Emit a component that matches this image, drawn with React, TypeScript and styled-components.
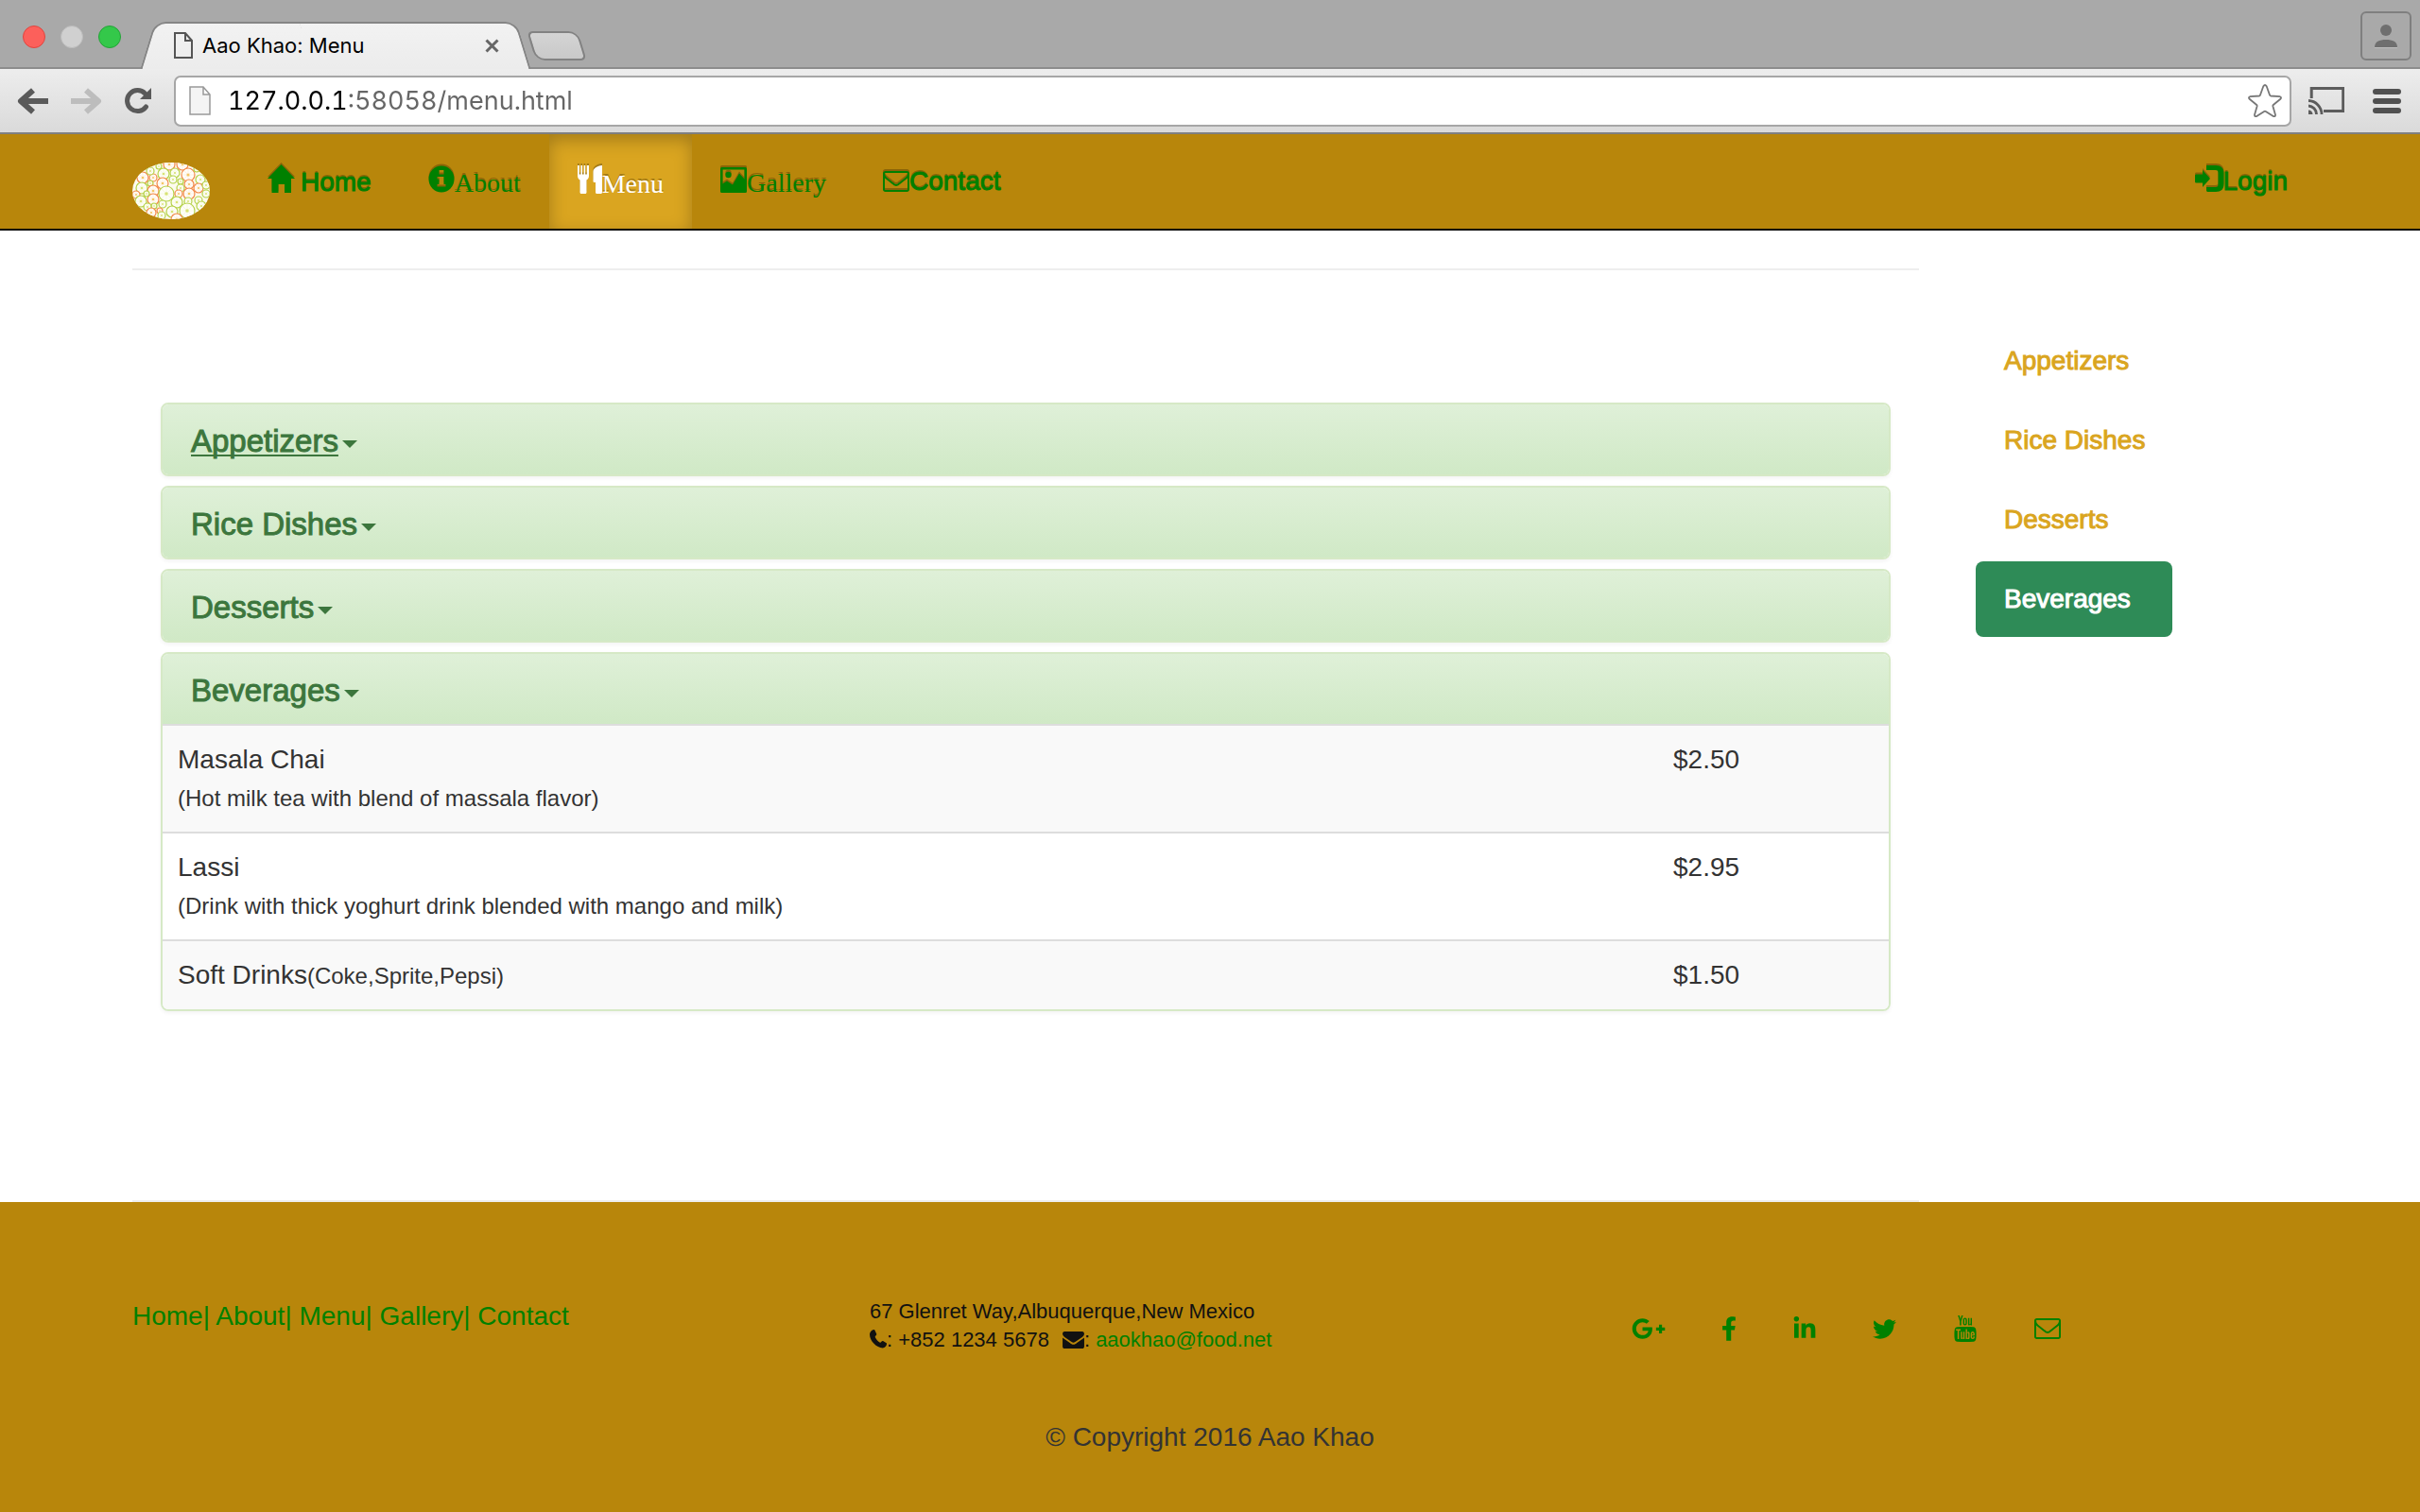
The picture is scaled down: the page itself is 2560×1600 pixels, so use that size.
import React from 'react';
import { FaFacebookF, FaGooglePlusG, FaLinkedinIn, FaTwitter } from 'react-icons/fa';
import { TfiYoutube } from 'react-icons/tfi';
import styled, { createGlobalStyle, css } from 'styled-components';

const SANS = '"Liberation Sans", Arial, sans-serif';
const SERIF = '"Liberation Serif", "Times New Roman", serif';
const CHROME = 'Inter, "Open Sans", sans-serif';

const GlobalStyle = createGlobalStyle`
  *, *::before, *::after { box-sizing: border-box; }
  body { margin: 0; background: #fff; color: #333; font: 28px/40px ${SANS}; }
  a { text-decoration: none; color: inherit; }
  ul { list-style: none; margin: 0; padding: 0; }
  svg { display: block; flex: none; }
  button { font: inherit; color: inherit; background: none; border: 0; padding: 0; }
`;

const Page = styled.div`
  min-height: 100vh;
  display: flex;
  flex-direction: column;
`;

/* ---------- browser window ---------- */

const TabStrip = styled.div`
  display: flex;
  align-items: flex-end;
  height: 73px;
  padding: 0 9px 0 24px;
  background: #a9a9a9;
  box-shadow: inset 0 -2px 0 #8c8c8c;
`;

const Lights = styled.div`
  display: flex;
  align-self: center;
  gap: 16px;
  padding-top: 4px;
`;

const Light = styled.button<{ $fill: string; $edge: string }>`
  width: 24px;
  height: 24px;
  border-radius: 50%;
  background: ${p => p.$fill};
  border: 1px solid ${p => p.$edge};
`;

const Tab = styled.div`
  position: relative;
  z-index: 1;
  display: flex;
  align-items: center;
  width: 384px;
  height: 50px;
  margin-left: 32px;
  padding: 0 12px 0 24px;
  color: #000;
  font: 22px/28px ${CHROME};
  &::before, &::after {
    content: '';
    position: absolute;
    z-index: -1;
    top: 0;
    bottom: 0;
    width: 60%;
    background: linear-gradient(#f2f2f2, #ececec);
    border-top: 2px solid #858585;
  }
  &::before {
    left: -4px;
    border-left: 2px solid #858585;
    border-top-left-radius: 12px;
    transform: skewX(-17deg);
  }
  &::after {
    right: -10px;
    border-right: 2px solid #858585;
    border-top-right-radius: 12px;
    transform: skewX(17deg);
  }
`;

const TabTitle = styled.span`
  flex: 1;
  padding-left: 10px;
`;

const CloseTab = styled.button`
  padding: 4px;
`;

const NewTab = styled.button`
  align-self: center;
  width: 54px;
  height: 31px;
  margin: 24px 0 0 18px;
  border: 2px solid #828282;
  border-radius: 6px 10px 6px 10px;
  background: linear-gradient(#d4d4d4, #c9c9c9);
  transform: skewX(17deg);
`;

const Profile = styled.button`
  display: grid;
  place-items: center;
  width: 54px;
  height: 52px;
  margin: 0 0 9px auto;
  border: 2px solid #7f7f7f;
  border-radius: 6px;
`;

const Toolbar = styled.div`
  display: flex;
  align-items: center;
  height: 69px;
  padding: 0 18px;
  background: linear-gradient(#ededed, #dadada);
  border-bottom: 2px solid #7f7f7f;
`;

const ToolButtons = styled.div`
  display: flex;
  gap: 24px;
  padding-right: 24px;
`;

const UrlBox = styled.label`
  flex: 1;
  display: flex;
  align-items: center;
  height: 54px;
  padding: 0 8px 0 14px;
  background: #fff;
  border: 2px solid #a6a6a6;
  border-radius: 7px;
`;

const UrlInput = styled.input`
  flex: 1;
  min-width: 0;
  height: 40px;
  margin-left: 18px;
  padding: 0;
  border: 0;
  outline: 0;
  font: 27px/40px ${CHROME};
  font-variant-numeric: tabular-nums;
  font-kerning: none;
  color: #666;
  background: linear-gradient(to right, #000 124px, #666 124px);
  background-clip: text;
  -webkit-text-fill-color: transparent;
`;

const ToolEnd = styled.div`
  display: flex;
  align-items: center;
  gap: 30px;
  padding: 0 2px 0 18px;
`;

/* ---------- site header ---------- */

const NavBar = styled.nav`
  display: flex;
  height: 102px;
  padding: 0 140px;
  background: #b8860b;
  border-bottom: 2px solid #080808;
`;

const Brand = styled.a`
  padding: 30px 31px 0 0;
`;

const NavList = styled.ul`
  display: flex;
  flex: 1;
  > li:last-child { margin-left: auto; }
  > li:last-child a { padding-right: 0; }
`;

const NavLink = styled.a<{ $serif?: boolean; $active?: boolean; $gap?: boolean }>`
  display: flex;
  align-items: baseline;
  height: 100px;
  padding: ${p => (p.$serif ? 32 : 30)}px 30px 0;
  color: green;
  font-family: ${p => (p.$serif ? SERIF : SANS)};
  text-shadow: 0 -2px 0 rgba(0, 0, 0, 0.25);
  svg {
    margin-right: ${p => (p.$gap ? 6 : 0)}px;
    transform: translateY(${p => (p.$serif ? 1 : 2)}px);
    filter: drop-shadow(0 -2px 0 rgba(0, 0, 0, 0.25));
  }
  ${p => !p.$serif && css`-webkit-text-stroke: 1px;`}
  ${p => p.$active && css`
    color: #fff;
    background: #daa520;
    box-shadow: inset 0 6px 18px rgba(0, 0, 0, 0.25);
  `}
`;

/* ---------- page body ---------- */

const Main = styled.main`
  flex: 1;
  display: flex;
  gap: 60px;
  padding: 0 140px;
`;

const Content = styled.section`
  flex: 1;
  display: flex;
  flex-direction: column;
  padding-top: 40px;
`;

const Rule = styled.hr`
  width: 100%;
  margin: 0;
  border: 0;
  border-top: 2px solid #eee;
`;

const Accordion = styled.div`
  flex: 1;
  display: flex;
  flex-direction: column;
  gap: 10px;
  padding: 140px 30px 200px;
`;

const Panel = styled.section`
  border: 2px solid #d6e9c6;
  border-radius: 8px;
  box-shadow: 0 2px 4px rgba(0, 0, 0, 0.05);
  overflow: hidden;
`;

const PanelTitle = styled.h4`
  margin: 0;
  padding: 20px 30px 16px;
  background: linear-gradient(#dff0d8, #d0e9c6);
  color: #3c763d;
  font-size: 33px;
  font-weight: 400;
  line-height: 38px;
  -webkit-text-stroke: 1px;
`;

const PanelToggle = styled.button<{ $underlined?: boolean }>`
  display: flex;
  align-items: center;
  gap: 4px;
  span {
    text-decoration: ${p => (p.$underlined ? 'underline' : 'none')};
    text-decoration-thickness: 2px;
    text-decoration-skip-ink: none;
    text-underline-offset: 3px;
  }
  &::after {
    content: '';
    margin-top: 6px;
    border: 8px solid transparent;
    border-top-color: currentColor;
    border-bottom: 0;
  }
`;

const MenuTable = styled.table`
  width: 100%;
  border-collapse: collapse;
  td {
    padding: 16px;
    border-top: 2px solid #ddd;
    vertical-align: top;
  }
  td:last-child { width: 244px; }
  tr:nth-child(odd) { background: #f9f9f9; }
  small { font-size: 24px; line-height: 1; }
`;

const SideNav = styled.nav`
  flex: 0 0 330px;
  padding-top: 98px;
  ul { display: grid; gap: 4px; width: 208px; }
`;

const SideLink = styled.a<{ $active?: boolean }>`
  display: block;
  padding: 20px 0 20px 30px;
  border-radius: 8px;
  color: ${p => (p.$active ? '#fff' : '#daa520')};
  background: ${p => (p.$active ? '#2e8b57' : 'transparent')};
  -webkit-text-stroke: 1px;
`;

/* ---------- footer ---------- */

const Footer = styled.footer`
  padding: 101px 140px 59px;
  background: #b8860b;
`;

const FooterColumns = styled.div`
  display: grid;
  grid-template-columns: 780fr 806fr 694fr;
  min-height: 66px;
  color: green;
`;

const Address = styled.address`
  color: #111;
  font: 22px/30px ${SANS};
  svg { display: inline-block; vertical-align: -2px; }
  a { color: green; }
`;

const Contact = styled.span`
  margin-right: 14px;
`;

const Social = styled.ul`
  display: flex;
  align-items: center;
  gap: 59px;
  a { display: block; }
`;

const FacebookIcon = styled(FaFacebookF)`
  width: 16px;
  height: 26px;
`;

const Copyright = styled.p`
  margin: 62px 0 0;
  text-align: center;
`;

/* ---------- drawings ---------- */

const ORANGE = '#f28a4b';
const LIME = '#b5d24a';
const slices: [number, number, number, string][] = [
  [39, 2, 6, ORANGE], [53, 2, 6, ORANGE], [28, 4, 3, LIME], [33, 12, 6, LIME], [45, 11, 5, LIME],
  [59, 13, 7, ORANGE], [11, 16, 6, ORANGE], [22, 16, 4, ORANGE], [32, 22, 6, ORANGE], [72, 18, 5, LIME],
  [19, 22, 3, LIME], [43, 18, 4, LIME], [60, 23, 5, ORANGE], [10, 27, 6, LIME], [22, 30, 6, ORANGE],
  [36, 33, 8, LIME], [51, 20, 3, LIME], [51, 27, 4, LIME], [60, 33, 6, ORANGE], [70, 27, 5, ORANGE],
  [4, 34, 4, ORANGE], [49, 33, 4, ORANGE], [9, 41, 6, LIME], [22, 39, 6, ORANGE], [47, 42, 6, LIME],
  [59, 41, 4, LIME], [70, 40, 4, LIME], [78, 33, 4, LIME], [32, 44, 4, LIME], [23, 46, 3, LIME],
  [42, 52, 6, LIME], [58, 51, 8, LIME], [73, 46, 5, LIME], [16, 47, 4, LIME], [20, 53, 5, ORANGE],
  [29, 51, 3, ORANGE], [31, 56, 4, LIME], [47, 60, 6, ORANGE], [19, 9, 4, LIME], [78, 24, 4, LIME],
  [68, 7, 3, LIME], [15, 33, 3, LIME],
];

const Logo = () => (
  <svg width="82" height="60" viewBox="0 0 82 60" role="img" aria-label="Aao Khao">
    <defs><clipPath id="oval"><ellipse cx="41" cy="30" rx="41" ry="30" /></clipPath></defs>
    <g clipPath="url(#oval)">
      <rect width="82" height="60" fill="#fdfbee" />
      {slices.map(([x, y, r, c]) => (
        <g key={`${x}-${y}`} stroke={c}>
          <circle cx={x} cy={y} r={r} fill="#fffef8" strokeWidth="1.2" />
          <path d={`M${x - r} ${y}h${2 * r}M${x} ${y - r}v${2 * r}M${x - r * 0.7} ${y - r * 0.7}l${r * 1.4} ${r * 1.4}M${x + r * 0.7} ${y - r * 0.7}l${-r * 1.4} ${r * 1.4}`} strokeWidth=".5" opacity=".25" />
          <circle cx={x} cy={y} r={r * 0.22} fill={c === ORANGE ? '#f3c763' : '#d8e374'} stroke="none" />
        </g>
      ))}
    </g>
  </svg>
);

const HomeIcon = () => (
  <svg width="29" height="30" viewBox="0 0 29 30" fill="currentColor"><path d="M14.500 0L29 15h-4v15h-7v-9h-6.500v9h-7V15H0z" /></svg>
);
const InfoIcon = () => (
  <svg width="28" height="29" viewBox="0 0 28 29" fill="currentColor">
    <path fillRule="evenodd" d="M14 .5a13.500 14 0 1 1 0 28 13.500 14 0 1 1 0-28zM11.500 5v4.500h5V5zM9.500 12v2.500h2V20h-2v2.500h9V20h-2v-8z" />
  </svg>
);
const CutleryIcon = () => (
  <svg width="26" height="30" viewBox="0 0 26 30" fill="currentColor">
    <path d="M0 0h1.800v9.500h1.600V0h1.600v9.500h1.600V0h1.600v9.500h1.600V0H12v11c0 2-1 3.500-2.500 4.500V28c0 1.500-.5 2-1.500 2H4c-1 0-1.500-.5-1.500-2V15.500C1 14.500 0 13 0 11zM26 0v28c0 1.500-.5 2-1.500 2h-4c-1 0-1.500-.5-1.500-2V18h-1c-1 0-1.500-.5-1.500-1.500V7c0-4 4-6.500 9.500-7z" />
  </svg>
);
const PictureIcon = () => (
  <svg width="28" height="27" viewBox="0 0 28 27" fill="currentColor">
    <path fillRule="evenodd" d="M1.500 0h25q1.500 0 1.500 1.500v24q0 1.500-1.500 1.500h-25Q0 27 0 25.500v-24Q0 0 1.500 0zM2.500 2.500v15l4.500-3 6 4L20 6.500l5.500 6v-10z" />
    <circle cx="8.500" cy="8" r="3.200" />
  </svg>
);
const LoginIcon = () => (
  <svg width="29" height="28" viewBox="0 0 29 28" fill="currentColor" overflow="visible">
    <path d="M12 0h10c5.500 0 8.500 3 8.500 8v12c0 5-3 8-8.500 8H14c-1.500 0-2-.5-2-2v-3h9.500c2.500 0 3-1 3-3V8c0-2-.5-3-3-3H12z" />
    <path d="M8 5l8 9-8 9v-4.500H1.500C.5 18.500 0 18 0 17v-6c0-1 .5-1.500 1.500-1.500H8z" />
  </svg>
);
const EnvelopeIcon = () => (
  <svg width="28" height="22" viewBox="0 256 1792 1408" fill="currentColor">
    <path d="M1664 1504v-768q-32 36-69 66-268 206-426 338-51 43-83 67t-86.500 48.500-102.500 24.500h-2q-48 0-102.500-24.500t-86.500-48.500-83-67q-158-132-426-338-37-30-69-66v768q0 13 9.500 22.500t22.500 9.500h1472q13 0 22.500-9.500t9.500-22.500zm0-1051v-24.500t-.5-13-3-12.500-5.500-9-9-7.500-14-2.500h-1472q-13 0-22.500 9.500t-9.500 22.500q0 168 147 284 193 152 401 317 6 5 35 29.500t46 37.500 44.500 31.500 50.500 27.500 43 9h2q20 0 43-9t50.500-27.500 44.500-31.500 46-37.500 35-29.500q208-165 401-317 54-43 100.500-115.500t46.500-131.500zm128-37v1088q0 66-47 113t-113 47h-1472q-66 0-113-47t-47-113v-1088q0-66 47-113t113-47h1472q66 0 113 47t47 113z" />
  </svg>
);
const PhoneIcon = () => (
  <svg width="18" height="20" viewBox="0 0 18 20" fill="currentColor">
    <path d="M1 2.200C2 .8 3.500 0 4.500 0c.6 0 .8.300 1.200 1.200l1.500 3.300c.3.800.1 1.100-.6 1.800C5.800 7.100 5.500 7.400 5.900 8.200c1.100 2.300 2.600 4 4.700 5.300.7.400 1 .2 1.800-.7.700-.9 1-1.100 1.700-.7l3.200 1.900c.7.400.8.600.7 1.200-.2 1.900-1.800 4.200-4.300 4.200C7.500 19.400 0 12 0 5.300 0 4 .3 3.200 1 2.200z" />
  </svg>
);
const MailIcon = () => (
  <svg width="23" height="18" viewBox="0 0 28 22" fill="currentColor">
    <path d="M28 7.800v11.700c0 1.400-1.100 2.500-2.500 2.500h-23C1.100 22 0 20.900 0 19.500V7.800c.5.500 1 1 1.600 1.400 2.600 1.800 5.300 3.600 7.800 5.500 1.300 1 3 2.200 4.600 2.200s3.300-1.200 4.600-2.200c2.500-1.800 5.200-3.600 7.800-5.500.6-.4 1.100-.9 1.600-1.400zM28 3c0 1.800-1.300 3.400-2.700 4.300-2.400 1.700-4.800 3.300-7.200 5-1 .7-2.700 2.100-4.100 2.100s-3.100-1.400-4.100-2.100c-2.400-1.700-4.800-3.300-7.200-5C1.600 6.500 0 4.700 0 3.200 0 1.500.9 0 2.500 0h23C26.900 0 28 1.300 28 3z" />
  </svg>
);

const TabFile = () => (
  <svg width="20" height="28" viewBox="0 0 20 28" fill="none" stroke="#555" strokeWidth="2"><path d="M1 1h11l7 8v18H1zM12 1v8h7" /></svg>
);
const CloseIcon = () => (
  <svg width="15" height="15" viewBox="0 0 15 15" stroke="#666" strokeWidth="3"><path d="M1.500 1.500l12 12M13.500 1.500l-12 12" /></svg>
);
const PersonIcon = () => (
  <svg width="24" height="25" viewBox="0 0 24 25">
    <path d="M0 25.500h24" stroke="#d5d5d5" strokeWidth="2" />
    <circle cx="12" cy="6" r="6" fill="#6f6f6f" />
    <path d="M0 24c0-6 5-8 12-8s12 2 12 8z" fill="#6f6f6f" />
  </svg>
);
const ArrowIcon = ({ color, flip }: { color: string; flip?: boolean }) => (
  <svg width="33" height="28" viewBox="0 0 33 28" fill="none" stroke={color} strokeWidth="6">
    <path d={flip ? 'M0 14h28M16 2.500L29 14 16 25.500' : 'M33 14H5M17 2.500L4 14l13 11.500'} strokeLinejoin="round" />
  </svg>
);
const ReloadIcon = () => (
  <svg width="28" height="28" viewBox="0 0 28 28">
    <path d="M22.500 20a11 11 0 1 1-1-14" fill="none" stroke="#5a5a5a" strokeWidth="5" strokeLinecap="round" />
    <path d="M28 0v12H16z" fill="#5a5a5a" />
  </svg>
);
const UrlFile = () => (
  <svg width="23" height="31" viewBox="0 0 23 31" fill="#f4f4f4" stroke="#999" strokeWidth="1.500"><path d="M1 1h14l7 8v21H1zM15 1v8h7" /></svg>
);
const StarIcon = () => (
  <svg width="36" height="35" viewBox="0 0 36 35" fill="#fff" stroke="#777" strokeWidth="1.800" strokeLinejoin="round">
    <path d="M16.300 2.200q1.700-2.400 3.400 0L23 11.500q.3.900 1.200 1l9.300.6q2.400.7.900 2.700l-7.600 6.200q-.6.600-.4 1.500l2.600 9q.1 2.300-2.200 1.600l-7.900-5.200q-.9-.6-1.800 0l-7.900 5.200Q6.900 34.800 7 32.500l2.600-9q.2-.9-.4-1.500l-7.600-6.200q-1.500-2 .9-2.700l9.300-.6q.9-.1 1.200-1z" />
  </svg>
);
const CastIcon = () => (
  <svg width="38" height="29" viewBox="0 0 38 29" fill="none" stroke="#5c5c5c">
    <path d="M3.200 12V1.500h33.500v24H16" strokeWidth="3" />
    <path d="M0 14.500A14.500 14.500 0 0 1 14 29M0 20a9 9 0 0 1 8.500 9" strokeWidth="2.800" />
    <path d="M0 24.500A4.500 4.500 0 0 1 4.500 29H0z" fill="#5c5c5c" stroke="none" />
  </svg>
);
const BurgerIcon = () => (
  <svg width="30" height="26" viewBox="0 0 30 26" stroke="#505050" strokeWidth="6" strokeLinecap="round"><path d="M3 3h24M3 13h24M3 23h24" /></svg>
);

const dishes = [
  { name: 'Masala Chai', note: '(Hot milk tea with blend of massala flavor)', below: true, price: '$2.50' },
  { name: 'Lassi', note: '(Drink with thick yoghurt drink blended with mango and milk)', below: true, price: '$2.95' },
  { name: 'Soft Drinks', note: '(Coke,Sprite,Pepsi)', below: false, price: '$1.50' },
];
const sections = ['Appetizers', 'Rice Dishes', 'Desserts', 'Beverages'];
const pages = ['Home', 'About', 'Menu', 'Gallery', 'Contact'];

export default function App() {
  return (
    <Page>
      <GlobalStyle />
      <TabStrip>
        <Lights>
          <Light aria-label="Close" $fill="#fc605b" $edge="#e0443e" />
          <Light aria-label="Minimise" $fill="#d0d0d0" $edge="#bcbcbc" />
          <Light aria-label="Full screen" $fill="#34c84a" $edge="#24a338" />
        </Lights>
        <Tab>
          <TabFile />
          <TabTitle>Aao Khao: Menu</TabTitle>
          <CloseTab aria-label="Close tab"><CloseIcon /></CloseTab>
        </Tab>
        <NewTab aria-label="New tab" />
        <Profile aria-label="Profile"><PersonIcon /></Profile>
      </TabStrip>
      <Toolbar>
        <ToolButtons>
          <button aria-label="Back"><ArrowIcon color="#5a5a5a" /></button>
          <button aria-label="Forward"><ArrowIcon color="#bdbdbd" flip /></button>
          <button aria-label="Reload"><ReloadIcon /></button>
        </ToolButtons>
        <UrlBox>
          <UrlFile />
          <UrlInput aria-label="Address" defaultValue="127.0.0.1:58058/menu.html" />
          <button aria-label="Bookmark"><StarIcon /></button>
        </UrlBox>
        <ToolEnd>
          <button aria-label="Cast"><CastIcon /></button>
          <button aria-label="Browser menu"><BurgerIcon /></button>
        </ToolEnd>
      </Toolbar>

      <NavBar>
        <Brand href="#home"><Logo /></Brand>
        <NavList>
          <li><NavLink href="#home" $gap><HomeIcon />Home</NavLink></li>
          <li><NavLink href="#about" $serif><InfoIcon />About</NavLink></li>
          <li><NavLink href="#menu" $serif $active><CutleryIcon />Menu</NavLink></li>
          <li><NavLink href="#gallery" $serif><PictureIcon />Gallery</NavLink></li>
          <li><NavLink href="#contact"><EnvelopeIcon />Contact</NavLink></li>
          <li><NavLink href="#login"><LoginIcon />Login</NavLink></li>
        </NavList>
      </NavBar>

      <Main>
        <Content>
          <Rule />
          <Accordion>
            {sections.map((name, i) => (
              <Panel key={name}>
                <PanelTitle>
                  <PanelToggle $underlined={i === 0} aria-expanded={i === 3}><span>{name}</span></PanelToggle>
                </PanelTitle>
                {i === 3 && (
                  <MenuTable>
                    <tbody>
                      {dishes.map(d => (
                        <tr key={d.name}>
                          <td>{d.name}{d.below && <br />}<small>{d.note}</small></td>
                          <td>{d.price}</td>
                        </tr>
                      ))}
                    </tbody>
                  </MenuTable>
                )}
              </Panel>
            ))}
          </Accordion>
          <Rule />
        </Content>
        <SideNav>
          <ul>
            {sections.map((name, i) => (
              <li key={name}><SideLink href={`#${name}`} $active={i === 3}>{name}</SideLink></li>
            ))}
          </ul>
        </SideNav>
      </Main>

      <Footer>
        <FooterColumns>
          <nav>
            {pages.map((name, i) => (
              <React.Fragment key={name}>{i > 0 && '| '}<a href={`#${name.toLowerCase()}`}>{name}</a></React.Fragment>
            ))}
          </nav>
          <Address>
            67 Glenret Way,Albuquerque,New Mexico<br />
            <Contact><PhoneIcon />: +852 1234 5678</Contact>
            <MailIcon />: <a href="mailto:aaokhao@food.net">aaokhao@food.net</a>
          </Address>
          <Social>
            <li><a href="#google" aria-label="Google Plus"><FaGooglePlusG size={36} /></a></li>
            <li><a href="#facebook" aria-label="Facebook"><FacebookIcon /></a></li>
            <li><a href="#linkedin" aria-label="LinkedIn"><FaLinkedinIn size={26} /></a></li>
            <li><a href="#twitter" aria-label="Twitter"><FaTwitter size={25} /></a></li>
            <li><a href="#youtube" aria-label="YouTube"><TfiYoutube size={28} /></a></li>
            <li><a href="#mail" aria-label="Mail"><EnvelopeIcon /></a></li>
          </Social>
        </FooterColumns>
        <Copyright>© Copyright 2016 Aao Khao</Copyright>
      </Footer>
    </Page>
  );
}
